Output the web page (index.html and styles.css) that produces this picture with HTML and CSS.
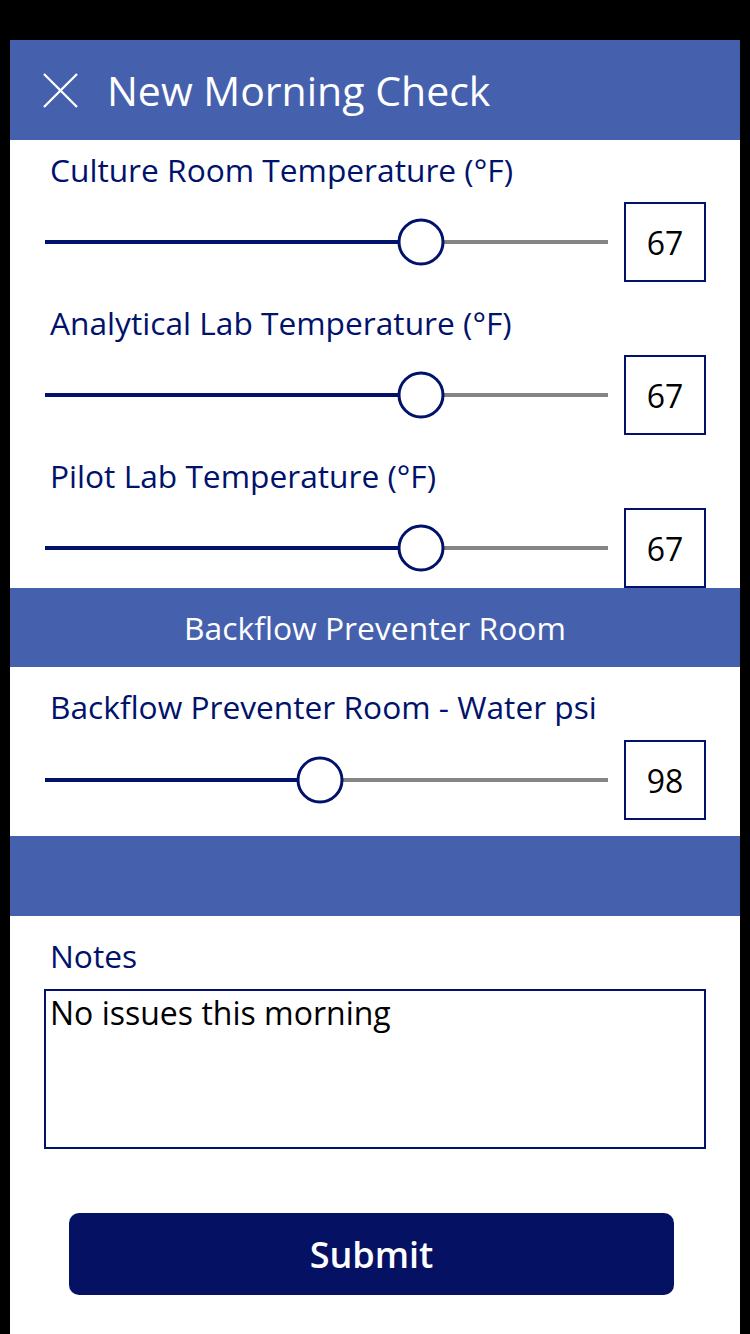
FILE: index.html
```html
<!DOCTYPE html>
<html lang="en">
<head>
<meta charset="utf-8">
<title>New Morning Check</title>
<link rel="stylesheet" href="styles.css">
</head>
<body>
<div class="screen">
  <header class="topbar">
    <svg class="close" viewBox="0 0 36 36" aria-hidden="true"><path d="M1 1L35 35M35 1L1 35" stroke="#fff" stroke-width="2.4" fill="none"/></svg>
    <h1 class="title">New Morning Check</h1>
  </header>

  <div class="gallery">
    <div class="field">
      <div class="label">Culture Room Temperature (°F)</div>
      <div class="slider-row">
        <div class="slider">
          <div class="track"><div class="fill" style="width:66.8%"></div></div>
          <div class="thumb" style="left:66.8%"></div>
        </div>
        <div class="value">67</div>
      </div>
    </div>
    <div class="field">
      <div class="label">Analytical Lab Temperature (°F)</div>
      <div class="slider-row">
        <div class="slider">
          <div class="track"><div class="fill" style="width:66.8%"></div></div>
          <div class="thumb" style="left:66.8%"></div>
        </div>
        <div class="value">67</div>
      </div>
    </div>
    <div class="field field-last">
      <div class="label">Pilot Lab Temperature (°F)</div>
      <div class="slider-row">
        <div class="slider">
          <div class="track"><div class="fill" style="width:66.8%"></div></div>
          <div class="thumb" style="left:66.8%"></div>
        </div>
        <div class="value">67</div>
      </div>
    </div>
  </div>

  <div class="section-bar">Backflow Preventer Room</div>

  <div class="field field-psi">
    <div class="label">Backflow Preventer Room - Water psi</div>
    <div class="slider-row">
      <div class="slider">
        <div class="track"><div class="fill" style="width:48.8%"></div></div>
        <div class="thumb" style="left:48.8%"></div>
      </div>
      <div class="value">98</div>
    </div>
  </div>

  <div class="section-bar section-empty"></div>

  <div class="notes">
    <div class="label">Notes</div>
    <div class="notes-box">No issues this morning</div>
  </div>

  <div class="actions">
    <button class="submit" type="button">Submit</button>
  </div>
</div>
</body>
</html>
```

FILE: styles.css
```css
* { box-sizing: border-box; }

html, body {
  margin: 0;
  padding: 0;
  background: #000;
}

body {
  width: 750px;
  height: 1334px;
  overflow: hidden;
  font-family: "Open Sans", "Noto Sans", sans-serif;
}

.screen {
  margin: 40px 10px 0;
  width: 730px;
  height: 1294px;
  background: #fff;
  display: flex;
  flex-direction: column;
}

.topbar {
  height: 100px;
  background: #4561ae;
  display: flex;
  align-items: center;
  padding: 0 0 0 33px;
  flex: none;
}

.close {
  width: 35px;
  height: 35px;
  flex: none;
}

.title {
  margin: 0 0 0 29px;
  font-size: 41px;
  font-weight: 400;
  color: #fff;
  line-height: 56px;
  letter-spacing: 0;
}

.gallery {
  display: flex;
  flex-direction: column;
}

.field {
  padding: 8px 0 11px;
  display: flex;
  flex-direction: column;
  gap: 10px;
}

.field-last {
  padding-bottom: 0;
}

.field-psi {
  padding: 18px 0 16px;
  gap: 11px;
}

.label {
  padding-left: 40px;
  font-size: 31.7px;
  line-height: 44px;
  color: #00126b;
  white-space: nowrap;
}

.slider-row {
  display: flex;
  align-items: center;
  gap: 16px;
  padding-left: 35px;
  height: 80px;
}

.slider {
  position: relative;
  flex: 0 0 563px;
  height: 80px;
  display: flex;
  align-items: center;
}

.track {
  width: 100%;
  height: 4px;
  background: #858585;
}

.fill {
  height: 100%;
  background: #00126b;
}

.thumb {
  position: absolute;
  top: 50%;
  width: 47px;
  height: 47px;
  border: 3px solid #00126b;
  border-radius: 50%;
  background: #fff;
  transform: translate(-50%, -50%);
}

.value {
  flex: 0 0 82px;
  height: 80px;
  border: 2px solid #00126b;
  display: flex;
  align-items: center;
  justify-content: center;
  font-size: 32px;
  color: #000;
}

.section-bar {
  height: 79px;
  background: #4561ae;
  color: #fff;
  font-size: 31.8px;
  display: flex;
  align-items: center;
  justify-content: center;
  flex: none;
}

.section-empty {
  height: 80px;
}

.notes {
  padding-top: 18px;
  display: flex;
  flex-direction: column;
  gap: 11px;
}

.notes-box {
  margin: 0 34px;
  height: 160px;
  border: 2px solid #00126b;
  padding: 0 4px;
  font-size: 32px;
  line-height: 44px;
  color: #000;
}

.actions {
  padding: 64px 66px 0 59px;
}

.submit {
  width: 100%;
  height: 82px;
  border: none;
  border-radius: 10px;
  background: #051263;
  color: #fff;
  font-family: "Open Sans", "Noto Sans", sans-serif;
  font-size: 36px;
  font-weight: 600;
  padding: 0;
}
```
